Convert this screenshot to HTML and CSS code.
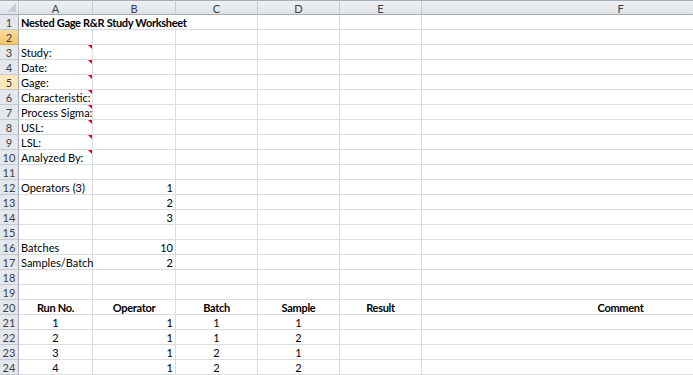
FILE: index.html
```html
<!DOCTYPE html>
<html>
<head>
<meta charset="utf-8">
<link rel="stylesheet" href="styles.css">
</head>
<body>
<div class="sheet">
  <div class="corner"></div><div class="ch">A</div><div class="ch">B</div><div class="ch">C</div><div class="ch">D</div><div class="ch">E</div><div class="ch">F</div>

  <div class="rh">1</div><div class="c b span3">Nested Gage R&amp;R Study Worksheet</div><div class="c"></div><div class="c"></div><div class="c"></div>
  <div class="rh sel">2</div><div class="c"></div><div class="c"></div><div class="c"></div><div class="c"></div><div class="c"></div><div class="c"></div>
  <div class="rh">3</div><div class="c note">Study:</div><div class="c"></div><div class="c"></div><div class="c"></div><div class="c"></div><div class="c"></div>
  <div class="rh">4</div><div class="c note">Date:</div><div class="c"></div><div class="c"></div><div class="c"></div><div class="c"></div><div class="c"></div>
  <div class="rh hl">5</div><div class="c note">Gage:</div><div class="c"></div><div class="c"></div><div class="c"></div><div class="c"></div><div class="c"></div>
  <div class="rh">6</div><div class="c note">Characteristic:</div><div class="c"></div><div class="c"></div><div class="c"></div><div class="c"></div><div class="c"></div>
  <div class="rh">7</div><div class="c note">Process Sigma:</div><div class="c"></div><div class="c"></div><div class="c"></div><div class="c"></div><div class="c"></div>
  <div class="rh">8</div><div class="c note">USL:</div><div class="c"></div><div class="c"></div><div class="c"></div><div class="c"></div><div class="c"></div>
  <div class="rh">9</div><div class="c note">LSL:</div><div class="c"></div><div class="c"></div><div class="c"></div><div class="c"></div><div class="c"></div>
  <div class="rh">10</div><div class="c note">Analyzed By:</div><div class="c"></div><div class="c"></div><div class="c"></div><div class="c"></div><div class="c"></div>
  <div class="rh">11</div><div class="c"></div><div class="c"></div><div class="c"></div><div class="c"></div><div class="c"></div><div class="c"></div>
  <div class="rh">12</div><div class="c">Operators (3)</div><div class="c r">1</div><div class="c"></div><div class="c"></div><div class="c"></div><div class="c"></div>
  <div class="rh">13</div><div class="c"></div><div class="c r">2</div><div class="c"></div><div class="c"></div><div class="c"></div><div class="c"></div>
  <div class="rh">14</div><div class="c"></div><div class="c r">3</div><div class="c"></div><div class="c"></div><div class="c"></div><div class="c"></div>
  <div class="rh">15</div><div class="c"></div><div class="c"></div><div class="c"></div><div class="c"></div><div class="c"></div><div class="c"></div>
  <div class="rh">16</div><div class="c">Batches</div><div class="c r">10</div><div class="c"></div><div class="c"></div><div class="c"></div><div class="c"></div>
  <div class="rh">17</div><div class="c">Samples/Batch</div><div class="c r">2</div><div class="c"></div><div class="c"></div><div class="c"></div><div class="c"></div>
  <div class="rh">18</div><div class="c"></div><div class="c"></div><div class="c"></div><div class="c"></div><div class="c"></div><div class="c"></div>
  <div class="rh">19</div><div class="c"></div><div class="c"></div><div class="c"></div><div class="c"></div><div class="c"></div><div class="c"></div>
  <div class="rh">20</div><div class="c b m">Run No.</div><div class="c b m">Operator</div><div class="c b m">Batch</div><div class="c b m">Sample</div><div class="c b m">Result</div><div class="c b m">Comment</div>
  <div class="rh">21</div><div class="c m">1</div><div class="c r">1</div><div class="c m">1</div><div class="c m">1</div><div class="c"></div><div class="c"></div>
  <div class="rh">22</div><div class="c m">2</div><div class="c r">1</div><div class="c m">1</div><div class="c m">2</div><div class="c"></div><div class="c"></div>
  <div class="rh">23</div><div class="c m">3</div><div class="c r">1</div><div class="c m">2</div><div class="c m">1</div><div class="c"></div><div class="c"></div>
  <div class="rh">24</div><div class="c m">4</div><div class="c r">1</div><div class="c m">2</div><div class="c m">2</div><div class="c"></div><div class="c"></div>
</div>
</body>
</html>
```
FILE: styles.css
```css
html, body {
  margin: 0;
  padding: 0;
  background: #ffffff;
  overflow: hidden;
}
.sheet {
  display: grid;
  grid-template-columns: 19px 74px 83px 82px 82px 82px 398px;
  grid-auto-rows: 15px;
  width: 693px;
  height: 375px;
  overflow: hidden;
  font-family: Lato, "Open Sans", sans-serif;
  font-size: 11px;
  color: #000;
}
.sheet > div {
  box-sizing: border-box;
  line-height: 15px;
  white-space: nowrap;
  overflow: visible;
}
.corner {
  position: relative;
  background: linear-gradient(#eef0f3, #e1e5ea);
  border-top: 1px solid #a5acb5;
  border-right: 1px solid #c5cad1;
  border-bottom: 1px solid #a5acb5;
}
.corner::after {
  content: "";
  position: absolute;
  right: 2px;
  bottom: 2px;
  border-left: 9px solid transparent;
  border-bottom: 9px solid #c9ced5;
}
.ch {
  background: linear-gradient(#eef0f3, #dfe3e8);
  border-top: 1px solid #a5acb5;
  border-right: 1px solid #c5cad1;
  border-bottom: 1px solid #a5acb5;
  text-align: center;
  color: #3a3f47;
  line-height: 13px;
}
.rh {
  background: #e4e8ed;
  border-right: 1px solid #a5acb5;
  border-bottom: 1px solid #c5cad1;
  text-align: center;
  color: #3a3f47;
}
.rh.sel {
  background: linear-gradient(#f9da9a, #f2c76c);
  border-bottom-color: #d9ac5a;
}
.rh.hl {
  background: #fce8b8;
}
.c {
  border-right: 1px solid #dadcdd;
  border-bottom: 1px solid #dadcdd;
  padding: 0 2px;
}
.c.span3 {
  grid-column: span 3;
}
.c.b {
  font-weight: bold;
  letter-spacing: -0.3px;
}
.c.r {
  text-align: right;
}
.c.m {
  text-align: center;
}
.note {
  position: relative;
}
.note::after {
  content: "";
  position: absolute;
  top: 0;
  right: 0;
  border-left: 4px solid transparent;
  border-top: 4px solid #e8001c;
}
```
